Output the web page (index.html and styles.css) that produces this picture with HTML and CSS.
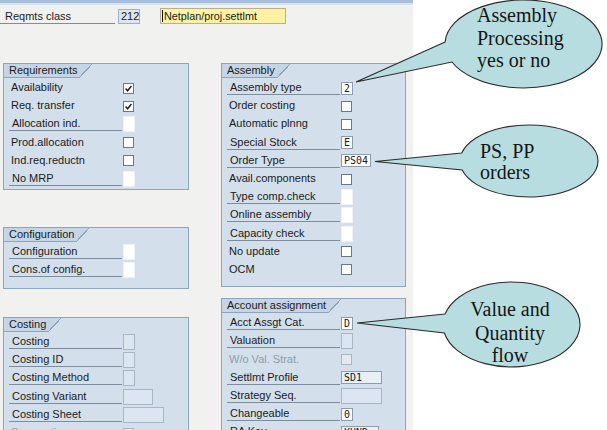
FILE: index.html
```html
<!DOCTYPE html>
<html lang="en">
<head>
<meta charset="utf-8">
<title>Requirements class 212</title>
<link rel="stylesheet" href="styles.css">
</head>
<body>
<div class="screen">
  <div class="topbar"></div>
  <div class="reqrow">
    <span class="lbl u head">Reqmts class</span>
    <span class="fld-code">212</span>
    <span class="fld-text"><span class="caret"></span>Netplan/proj.settlmt</span>
  </div>

  <div class="columns">
    <div class="col">
      <section class="box req">
        <div class="tab">Requirements</div>
        <div class="row"><span class="lbl">Availability</span><span class="cb on"><svg viewBox="0 0 9 9"><path d="M1.6 4.6 L3.6 6.8 L7.4 2"/></svg></span></div>
        <div class="row"><span class="lbl">Req. transfer</span><span class="cb on"><svg viewBox="0 0 9 9"><path d="M1.6 4.6 L3.6 6.8 L7.4 2"/></svg></span></div>
        <div class="row"><span class="lbl u">Allocation ind.</span><span class="fe"></span></div>
        <div class="row"><span class="lbl">Prod.allocation</span><span class="cb"></span></div>
        <div class="row"><span class="lbl">Ind.req.reductn</span><span class="cb"></span></div>
        <div class="row"><span class="lbl u">No MRP</span><span class="fe"></span></div>
      </section>

      <section class="box config">
        <div class="tab">Configuration</div>
        <div class="row"><span class="lbl u">Configuration</span><span class="fe"></span></div>
        <div class="row"><span class="lbl u">Cons.of config.</span><span class="fe"></span></div>
      </section>

      <section class="box costing">
        <div class="tab">Costing</div>
        <div class="row"><span class="lbl u">Costing</span><span class="fd"></span></div>
        <div class="row"><span class="lbl u">Costing ID</span><span class="fd"></span></div>
        <div class="row"><span class="lbl u">Costing Method</span><span class="fd"></span></div>
        <div class="row"><span class="lbl u">Costing Variant</span><span class="fd w30"></span></div>
        <div class="row"><span class="lbl u">Costing Sheet</span><span class="fd w41"></span></div>
        <div class="row"><span class="lbl off">Sep.costing run</span><span class="cb dis"></span></div>
      </section>
    </div>

    <div class="col">
      <section class="box assembly">
        <div class="tab">Assembly</div>
        <div class="row"><span class="lbl u">Assembly type</span><span class="fv">2</span></div>
        <div class="row"><span class="lbl">Order costing</span><span class="cb"></span></div>
        <div class="row"><span class="lbl">Automatic plnng</span><span class="cb"></span></div>
        <div class="row"><span class="lbl u">Special Stock</span><span class="fv">E</span></div>
        <div class="row"><span class="lbl u">Order Type</span><span class="fv">PS04</span></div>
        <div class="row"><span class="lbl">Avail.components</span><span class="cb"></span></div>
        <div class="row"><span class="lbl u">Type comp.check</span><span class="fe"></span></div>
        <div class="row"><span class="lbl u">Online assembly</span><span class="fe"></span></div>
        <div class="row"><span class="lbl u">Capacity check</span><span class="fe"></span></div>
        <div class="row"><span class="lbl">No update</span><span class="cb"></span></div>
        <div class="row"><span class="lbl">OCM</span><span class="cb"></span></div>
      </section>

      <section class="box account">
        <div class="tab">Account assignment</div>
        <div class="row"><span class="lbl u">Acct Assgt Cat.</span><span class="fv">D</span></div>
        <div class="row"><span class="lbl u">Valuation</span><span class="fd"></span></div>
        <div class="row"><span class="lbl off">W/o Val. Strat.</span><span class="cb dis"></span></div>
        <div class="row"><span class="lbl u">Settlmt Profile</span><span class="fv lt w41">SD1</span></div>
        <div class="row"><span class="lbl u">Strategy Seq.</span><span class="fd w41"></span></div>
        <div class="row"><span class="lbl u">Changeable</span><span class="fv">0</span></div>
        <div class="row"><span class="lbl u">RA Key</span><span class="fv lt w38">KUND</span></div>
      </section>
    </div>
  </div>
</div>

<svg class="callouts" width="607" height="430" viewBox="0 0 607 430">
  <g class="bubble">
    <path d="M445.1 42 L356 82 L451.9 62 A78.5 44 0 1 0 445.1 42 Z"/>
    <path d="M461.7 153 L375 161.5 L462.2 170 A69 36 0 1 0 461.7 153 Z"/>
    <path d="M445.1 314 L357 323 L444.4 333 A68.5 42.5 0 1 0 445.1 314 Z"/>
  </g>
  <g class="note">
    <text x="477" y="21.5">Assembly</text>
    <text x="477" y="44.5">Processing</text>
    <text x="477" y="66.5">yes or no</text>
    <text x="480" y="158">PS, PP</text>
    <text x="480" y="179">orders</text>
    <text class="mid" x="510" y="316">Value and</text>
    <text class="mid" x="510" y="339.5">Quantity</text>
    <text class="mid" x="510" y="361.5">flow</text>
  </g>
</svg>
</body>
</html>
```

FILE: styles.css
```css
html, body {
  margin: 0;
  padding: 0;
  background: #ffffff;
}

body {
  position: relative;
  width: 607px;
  height: 430px;
  overflow: hidden;
}

/* SAP screen area */
.screen {
  width: 413px;
  height: 430px;
  background: #f1f1f0;
  font-family: "Liberation Sans", Arial, sans-serif;
  font-size: 11px;
  color: #1b1b1b;
  overflow: hidden;
}

.topbar {
  height: 3px;
  background: #a8bfdb;
  border-bottom: 2px solid #d6e2ef;
}

/* header line with the requirements class */
.reqrow {
  display: flex;
  align-items: center;
  height: 16px;
  margin-top: 3px;
}

.lbl {
  box-sizing: border-box;
  flex: none;
  width: 113px;
  height: 14px;
  line-height: 13px;
  padding-left: 2px;
  white-space: nowrap;
  overflow: hidden;
}

.lbl.u {
  padding-left: 3px;
  border-bottom: 1px solid #7d8d9e;
}

.lbl.off {
  color: #8e9cab;
}

.lbl.head {
  width: 115px;
  padding-left: 5px;
  height: 15px;
  line-height: 14px;
  font-size: 11px;
}

.fld-code {
  box-sizing: border-box;
  width: 22px;
  height: 15px;
  margin-left: 3px;
  line-height: 13px;
  padding-left: 2px;
  background: #dbe6f2;
  border: 1px solid #9fb0c2;
  font-size: 11px;
}

.fld-text {
  box-sizing: border-box;
  display: flex;
  align-items: center;
  width: 126px;
  height: 16px;
  margin-left: 20px;
  padding-left: 1px;
  background: #fdf2a3;
  border: 1px solid #b9b08a;
  font-size: 10.8px;
}

.caret {
  width: 1px;
  height: 12px;
  margin-right: 1px;
  background: #111;
}

/* group boxes */
.columns {
  display: grid;
  grid-template-columns: 186px 185px;
  column-gap: 32px;
  padding-left: 3px;
  margin-top: 39px;
}

.col {
  display: flex;
  flex-direction: column;
}

.box {
  box-sizing: border-box;
  background: #d3dfeb;
  border: 1px solid #8ea4ba;
  padding: 0 0 0 5px;
}

.box.req { padding-bottom: 1px; }
.box.config { margin-top: 37px; padding-bottom: 8px; }
.box.costing { margin-top: 28.5px; height: 200px; }
.box.assembly { padding-bottom: 7px; }
.box.account { margin-top: 11px; height: 200px; }

.tab {
  position: relative;
  width: fit-content;
  height: 13px;
  line-height: 13px;
  margin: 0 0 1px -5px;
  padding: 0 2px 0 5px;
  background: #c5d5e5;
  border-bottom: 1px solid #8ea4ba;
  white-space: nowrap;
}

/* slanted right edge of the tab */
.tab::after {
  content: "";
  position: absolute;
  top: 0;
  right: -13px;
  width: 13px;
  height: 14px;
  background: linear-gradient(to bottom right,
    #c5d5e5 calc(50% - 0.6px),
    #8ea4ba calc(50% - 0.6px),
    #8ea4ba calc(50% + 0.6px),
    transparent calc(50% + 0.6px));
}

.row {
  display: flex;
  align-items: center;
  height: 18.2px;
}

.row > :last-child {
  margin-left: 1px;
}

/* checkbox */
.cb {
  box-sizing: border-box;
  display: block;
  width: 11px;
  height: 11px;
  background: #fff;
  border: 1px solid #6c7885;
}

.cb svg {
  display: block;
  width: 9px;
  height: 9px;
}

.cb path {
  fill: none;
  stroke: #1f1f1f;
  stroke-width: 1.5;
}

.cb.dis {
  background: #e3e9ef;
  border-color: #a9b6c3;
}

/* empty entry field */
.fe {
  box-sizing: border-box;
  width: 12px;
  height: 16px;
  background: #fff;
  border: 1px solid #eef2f6;
}

/* display-only field */
.fd {
  box-sizing: border-box;
  width: 12px;
  height: 16px;
  background: #dce6f0;
  border: 1px solid #a8b6c5;
}

/* field with a value */
.fv {
  box-sizing: border-box;
  min-width: 12px;
  height: 13px;
  padding: 0 2px 0 2px;
  line-height: 11px;
  background: #fff;
  border: 1px solid #8f9cab;
  font-family: "DejaVu Sans Mono", "Liberation Mono", monospace;
  font-size: 10px;
  color: #1a1a1a;
}

.fv.lt { background: #e9eff6; }

.w30 { width: 30px; }
.w38 { width: 38px; }
.w41 { width: 41px; }

/* speech bubbles */
.callouts {
  position: absolute;
  left: 0;
  top: 0;
  pointer-events: none;
}

.bubble path {
  fill: #b8dde0;
  stroke: #2a2a2a;
  stroke-width: 1.1;
  stroke-linejoin: miter;
}

.note text {
  font-family: "Liberation Serif", "Times New Roman", serif;
  font-size: 20px;
  fill: #151515;
}

.note text.mid {
  text-anchor: middle;
}
```
